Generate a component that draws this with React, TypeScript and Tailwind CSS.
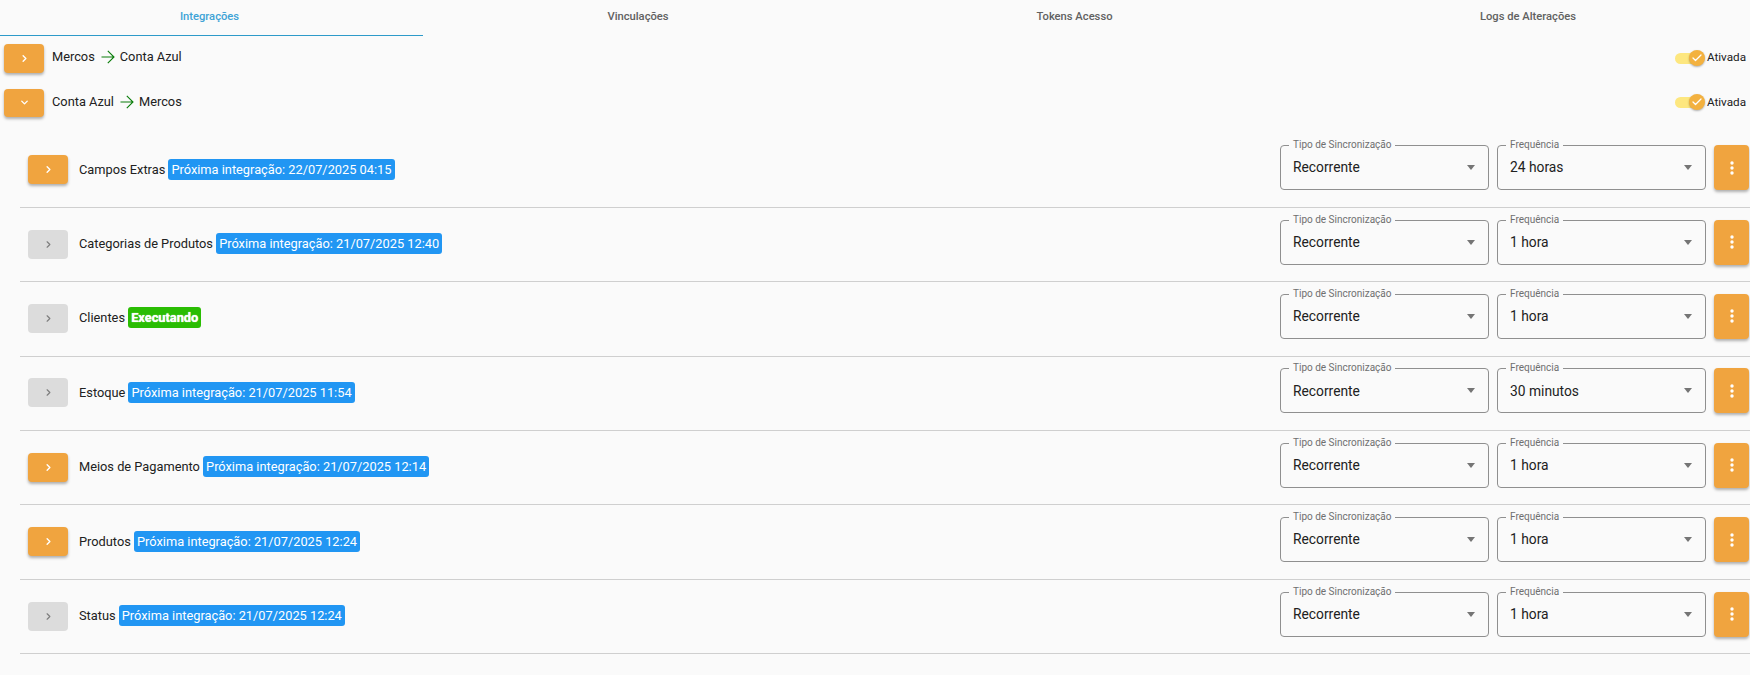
import { ChevronDown, ChevronRight, Check } from "lucide-react";

const tabs = ["Integrações", "Vinculações", "Tokens Acesso", "Logs de Alterações"];

const rows = [
  { name: "Campos Extras", badge: "Próxima integração: 22/07/2025 04:15", freq: "24 horas", active: true },
  { name: "Categorias de Produtos", badge: "Próxima integração: 21/07/2025 12:40", freq: "1 hora", active: false },
  { name: "Clientes", badge: "Executando", freq: "1 hora", active: false, running: true },
  { name: "Estoque", badge: "Próxima integração: 21/07/2025 11:54", freq: "30 minutos", active: false },
  { name: "Meios de Pagamento", badge: "Próxima integração: 21/07/2025 12:14", freq: "1 hora", active: true },
  { name: "Produtos", badge: "Próxima integração: 21/07/2025 12:24", freq: "1 hora", active: true },
  { name: "Status", badge: "Próxima integração: 21/07/2025 12:24", freq: "1 hora", active: false },
];

const orangeBtn = "bg-[#f0a43f] text-white rounded shadow-[0_2px_3px_rgba(0,0,0,0.3)]";

const GreenArrow = () => (
  <svg width="14" height="14" viewBox="0 0 14 14" fill="none" stroke="#0a7d0a" strokeWidth="1.1" className="ml-[6px] mr-[5px]">
    <path d="M0.5 7h12.5M6.8 0.8L13 7l-6.2 6.2" />
  </svg>
);

const Flow = ({ from, to, open }: { from: string; to: string; open?: boolean }) => (
  <div className="flex h-[44.6px] pl-1 pr-1 pt-2">
    <button className={`w-10 h-[28.6px] flex items-center justify-center ${orangeBtn}`}>
      {open ? <ChevronDown size={11} strokeWidth={3} /> : <ChevronRight size={11} strokeWidth={3} />}
    </button>
    <div className="flex items-center h-[20px] ml-2 mt-[3px] text-[12.8px] text-[#212121]">
      {from}
      <GreenArrow />
      {to}
    </div>
    <div className="ml-auto flex items-center h-[28px] text-[11.7px] text-[#212121]">
      <span className="relative w-[29px] h-[11px] rounded-full bg-[#fde77f] mr-[3px]">
        <span className="absolute -right-[1px] -top-[3px] w-[16px] h-[16px] rounded-full bg-[#f3b13f] text-white flex items-center justify-center shadow-[0_1px_2px_rgba(0,0,0,0.3)]">
          <Check size={12} strokeWidth={2.5} />
        </span>
      </span>
      Ativada
    </div>
  </div>
);

const Field = ({ label, value }: { label: string; value: string }) => (
  <div className="relative w-[209px] h-[45px] border border-[#8f8f8f] rounded flex items-center px-3">
    <span className="absolute -top-[7px] left-2 bg-[#fafafa] px-1 text-[10px] leading-[12px] text-[#6f6f6f]">{label}</span>
    <span className="text-[13.8px] text-[#212121]">{value}</span>
    <span className="ml-auto mr-[1px] w-0 h-0 border-x-[4px] border-x-transparent border-t-[5px] border-t-[#757575]" />
  </div>
);

export default function App() {
  return (
    <div className="min-h-[675px] bg-[#fafafa] font-['Roboto',sans-serif]">
      {/* Tabs */}
      <div className="flex h-9">
        {tabs.map((t, i) => (
          <div
            key={t}
            className={`flex items-center justify-center pb-[1px] text-[11.2px] font-medium ${
              i === 0 ? "text-[#3ea3d6] border-b border-[#2d9ac9] w-[423px] pr-1" : "text-[#616161]"
            } ${i === 1 ? "w-[430px]" : ""} ${i === 2 ? "w-[443px]" : ""} ${i === 3 ? "flex-1 pl-[10px]" : ""}`}
          >
            {t}
          </div>
        ))}
      </div>

      <Flow from="Mercos" to="Conta Azul" />
      <Flow from="Conta Azul" to="Mercos" open />

      {/* Rows */}
      <div className="ml-5 mt-[8.3px]">
        {rows.map((r) => (
          <div key={r.name} className="flex items-center h-[74.4px] border-b border-[#cfcfcf] pb-[2px]">
            <button
              className={`ml-2 mt-[1px] w-10 h-[29px] flex items-center justify-center rounded ${
                r.active ? orangeBtn : "bg-[#dcdcdc] text-[#7d7d7d]"
              }`}
            >
              <ChevronRight size={11} strokeWidth={r.active ? 3 : 2.5} />
            </button>
            <span className="ml-[11px] text-[12.8px] text-[#212121]">{r.name}</span>
            <span
              className={`ml-[3px] px-[3.2px] h-[21px] leading-[21px] rounded-[3px] text-white text-[12.8px] ${
                r.running ? "bg-[#2abd03] font-bold [text-shadow:0_0_1px_#ffffff]" : "bg-[#2196f3]"
              }`}
            >
              {r.badge}
            </span>
            <div className="ml-auto mr-[1px] mt-[-3px] flex items-center gap-2">
              <Field label="Tipo de Sincronização" value="Recorrente" />
              <Field label="Frequência" value={r.freq} />
              <button className={`w-[35px] h-[45px] flex items-center justify-center ${orangeBtn}`}>
                <svg width="4" height="14" viewBox="0 0 4 14" fill="#ffffff">
                  <circle cx="2" cy="2" r="1.7" />
                  <circle cx="2" cy="7" r="1.7" />
                  <circle cx="2" cy="12" r="1.7" />
                </svg>
              </button>
            </div>
          </div>
        ))}
      </div>
    </div>
  );
}
